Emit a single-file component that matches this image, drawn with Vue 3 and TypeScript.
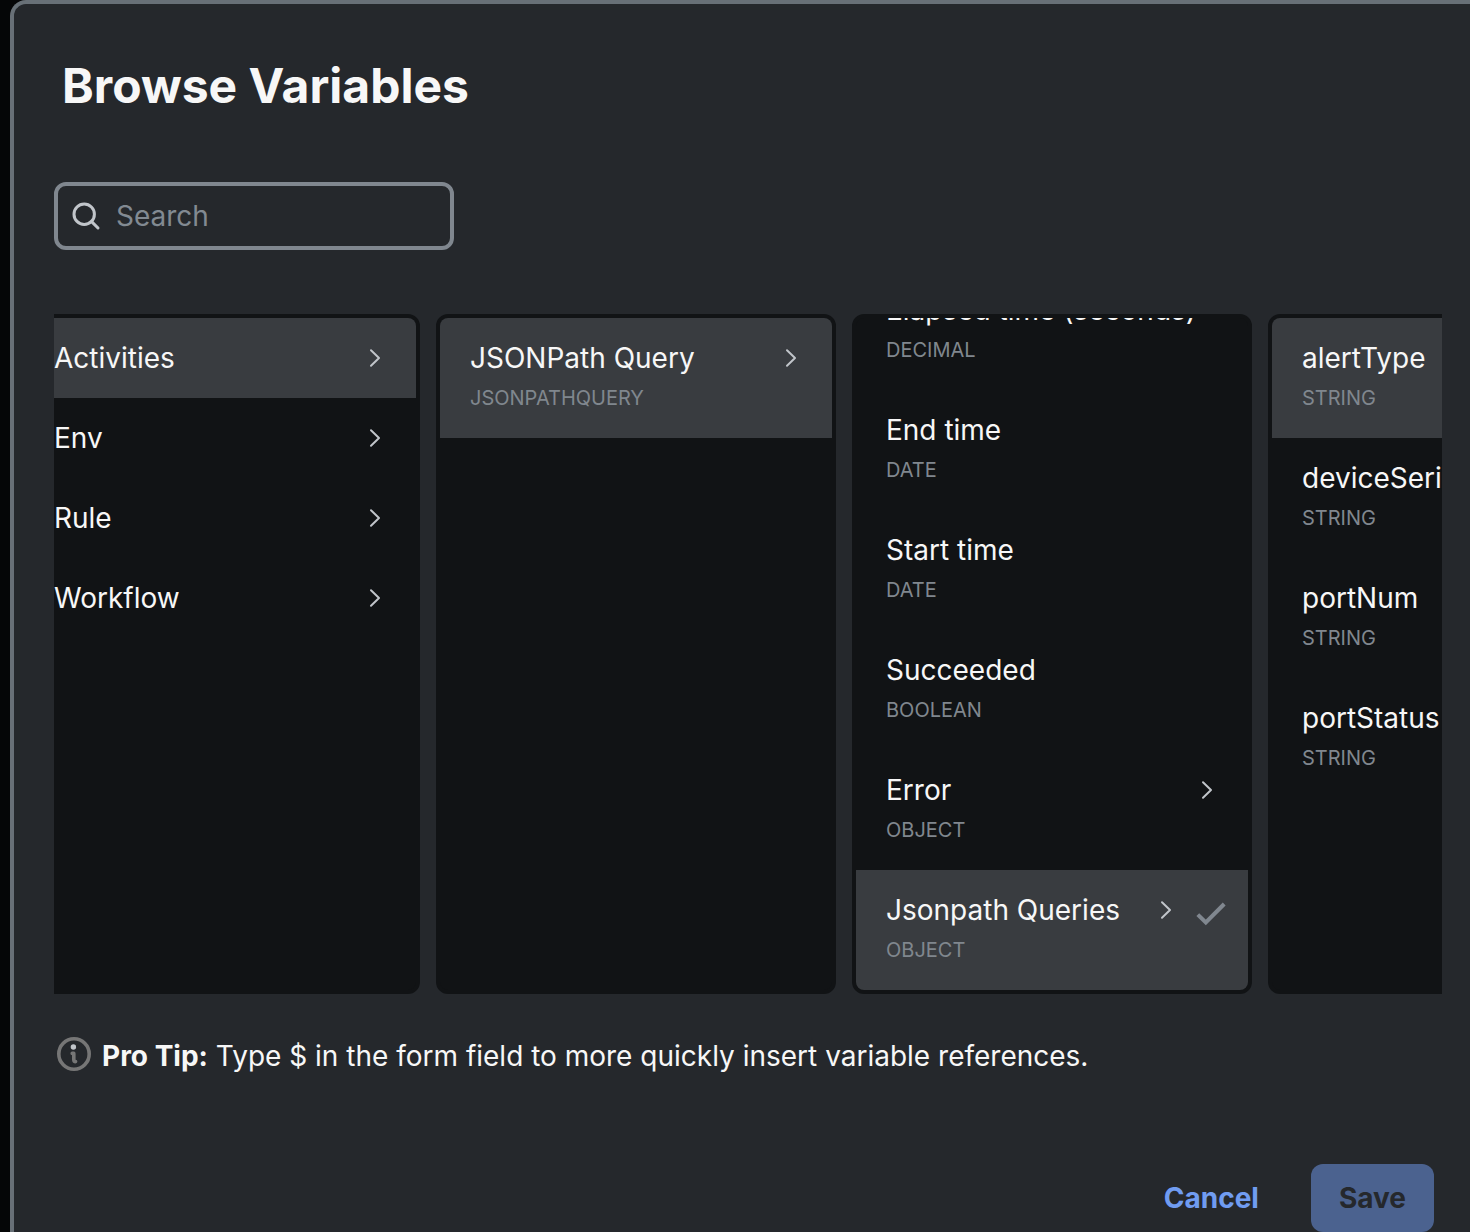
<script setup lang="ts">
import { computed, onMounted, ref } from 'vue'

interface Item {
  name: string
  type?: string
  branch?: boolean
  selected?: boolean
  checked?: boolean
}

interface Column {
  id: string
  items: Item[]
}

const columns: Column[] = [
  {
    id: 'Scope',
    items: [
      { name: 'Activities', branch: true, selected: true },
      { name: 'Env', branch: true },
      { name: 'Rule', branch: true },
      { name: 'Workflow', branch: true },
    ],
  },
  {
    id: 'Activity',
    items: [{ name: 'JSONPath Query', type: 'JSONPATHQUERY', branch: true, selected: true }],
  },
  {
    id: 'Output',
    items: [
      { name: 'Elapsed time (seconds)', type: 'DECIMAL' },
      { name: 'End time', type: 'DATE' },
      { name: 'Start time', type: 'DATE' },
      { name: 'Succeeded', type: 'BOOLEAN' },
      { name: 'Error', type: 'OBJECT', branch: true },
      { name: 'Jsonpath Queries', type: 'OBJECT', branch: true, selected: true, checked: true },
    ],
  },
  {
    id: 'Property',
    items: [
      { name: 'alertType', type: 'STRING', selected: true },
      { name: 'deviceSerial', type: 'STRING' },
      { name: 'portNum', type: 'STRING' },
      { name: 'portStatus', type: 'STRING' },
    ],
  },
]

const search = ref('')
const browser = ref<HTMLElement | null>(null)

const visibleColumns = computed(() => {
  const term = search.value.trim().toLowerCase()
  return columns.map((column) => ({
    ...column,
    items: column.items.filter((item) => item.name.toLowerCase().includes(term)),
  }))
})

onMounted(() => {
  if (!browser.value) return
  browser.value.scrollLeft = 34
  browser.value.querySelectorAll<HTMLElement>('.list').forEach((list) => {
    if (list.querySelector('.checked')) list.scrollTop = list.scrollHeight
  })
})
</script>

<template>
  <div class="backdrop">
    <section class="dialog" role="dialog" aria-labelledby="dialog-title">
      <h1 id="dialog-title">Browse Variables</h1>

      <label class="search">
        <svg class="search-icon" viewBox="0 0 32 32" aria-hidden="true">
          <circle cx="14.2" cy="14.2" r="10.2" />
          <path d="M21.6 21.6 28 28" />
        </svg>
        <input v-model="search" type="text" placeholder="Search" aria-label="Search" />
      </label>

      <div ref="browser" class="browser">
        <div v-for="column in visibleColumns" :key="column.id" class="column">
          <ul class="list" :aria-label="column.id">
            <li v-for="item in column.items" :key="item.name">
              <button
                type="button"
                class="item"
                :class="{ selected: item.selected, checked: item.checked }"
              >
                <span class="label">
                  <span class="name">{{ item.name }}</span>
                  <span v-if="item.type" class="type">{{ item.type }}</span>
                </span>
                <svg v-if="item.branch" class="chevron" viewBox="0 0 22 40" aria-hidden="true">
                  <path d="M7 12.2 15 20 7 27.8" />
                </svg>
                <svg v-if="item.checked" class="check" viewBox="0 0 32 40" aria-hidden="true">
                  <path d="M4.8 24.6 12.8 32.4 31.2 14" />
                </svg>
              </button>
            </li>
          </ul>
        </div>
      </div>

      <p class="tip">
        <svg class="info" viewBox="0 0 40 40" aria-hidden="true">
          <circle class="ring" cx="20" cy="18" r="15.2" />
          <path class="stem" d="M18.2 17.4h1.6v6.4q0 1.8 1.8 1.8" />
          <circle class="dot" cx="19.4" cy="11" r="2.7" />
        </svg>
        <span><strong>Pro Tip:</strong> Type $ in the form field to more quickly insert variable references.</span>
      </p>

      <footer class="actions">
        <button type="button" class="cancel">Cancel</button>
        <button type="button" class="save" disabled>Save</button>
      </footer>
    </section>
  </div>
</template>

<style>
body {
  background: #050607;
  overflow: hidden;
}
</style>

<style scoped>
.backdrop {
  box-sizing: border-box;
  min-height: 100vh;
  padding-left: 10px;
  background: #050607;
  font-family: Inter, "Liberation Sans", sans-serif;
  font-size: 28px;
  line-height: 40px;
  color: #f7f7f7;
  display: flex;
}

.dialog {
  box-sizing: border-box;
  flex: 1;
  min-width: 0;
  display: flex;
  flex-direction: column;
  padding: 54px 28px 0 40px;
  border: solid #687077;
  border-width: 4px 0 0 4px;
  border-radius: 16px 0 0 0;
  background: #25282c;
}

h1 {
  margin: 0 8px 68px;
  font-size: 48px;
  line-height: 56px;
  font-weight: 700;
}

.search {
  box-sizing: border-box;
  width: 400px;
  height: 68px;
  margin-bottom: 64px;
  padding: 0 12px;
  display: flex;
  align-items: center;
  gap: 14px;
  border: 4px solid #80878f;
  border-radius: 12px;
}

.search-icon {
  width: 32px;
  height: 32px;
  flex: none;
  fill: none;
  stroke: #c1c5ca;
  stroke-width: 3;
  stroke-linecap: round;
}

.search input {
  flex: 1;
  min-width: 0;
  padding: 0;
  border: 0;
  outline: 0;
  background: none;
  color: inherit;
  font: inherit;
}

.search input::placeholder {
  color: #828a92;
  opacity: 1;
}

.browser {
  display: flex;
  gap: 16px;
  overflow-x: auto;
  scrollbar-width: none;
}

.column {
  box-sizing: border-box;
  flex: none;
  width: 400px;
  height: 680px;
  border: 4px solid #111315;
  border-radius: 12px;
  background: #111315;
  overflow: hidden;
}

.list {
  height: 100%;
  margin: 0;
  padding: 0;
  list-style: none;
  overflow-y: auto;
  scrollbar-width: none;
}

.item {
  width: 100%;
  padding: 20px 30px;
  display: flex;
  align-items: flex-start;
  gap: 16px;
  border: 0;
  background: none;
  color: inherit;
  font: inherit;
  text-align: left;
}

.item.selected {
  background: #393c40;
}

.item.checked {
  padding-right: 23px;
}

.label {
  flex: 1;
  min-width: 0;
  display: flex;
  flex-direction: column;
  white-space: nowrap;
}

.type {
  font-size: 20px;
  color: #80878e;
}

.chevron {
  width: 22px;
  height: 40px;
  flex: none;
  fill: none;
  stroke: #c1c5ca;
  stroke-width: 2;
  stroke-linecap: round;
  stroke-linejoin: round;
}

.check {
  width: 32px;
  height: 40px;
  flex: none;
  overflow: visible;
  fill: none;
  stroke: #80878f;
  stroke-width: 4;
}

.tip {
  margin: 42px 0 88px;
  display: flex;
  align-items: flex-start;
  gap: 8px;
}

.info {
  width: 40px;
  height: 40px;
  flex: none;
  fill: none;
  stroke: #767676;
}

.ring,
.stem {
  stroke-width: 3.6;
}

.stem {
  stroke-linecap: round;
  stroke-linejoin: round;
}

.dot {
  fill: #c1c5ca;
  stroke: none;
}

.actions {
  display: flex;
  justify-content: flex-end;
  gap: 24px;
  padding-right: 8px;
}

.actions button {
  height: 68px;
  padding: 0 28px;
  border: 0;
  border-radius: 12px;
  font: inherit;
  font-weight: 700;
}

.cancel {
  background: none;
  color: #709cf1;
}

.save {
  background: #4b628f;
  color: #25282c;
}
</style>
